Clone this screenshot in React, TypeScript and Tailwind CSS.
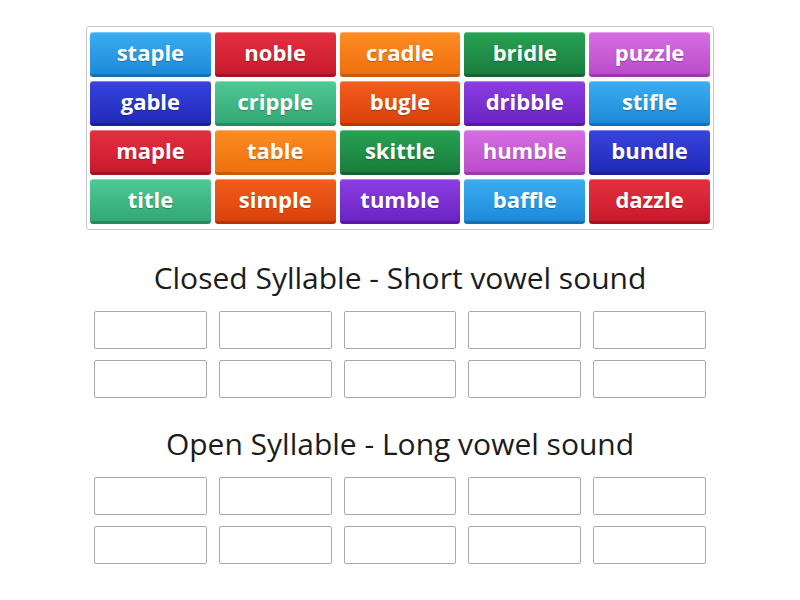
import React from "react";

type Tone = { bg: string };

const tones: Tone[] = [
  { bg: "bg-gradient-to-b from-[#3badf2] to-[#1d8ad8] border-b-[#1670b4]" },
  { bg: "bg-gradient-to-b from-[#e3303f] to-[#c9192d] border-b-[#a51224]" },
  { bg: "bg-gradient-to-b from-[#fc8c22] to-[#ef700c] border-b-[#cb5a06]" },
  { bg: "bg-gradient-to-b from-[#27a253] to-[#1b7d3e] border-b-[#146430]" },
  { bg: "bg-gradient-to-b from-[#d66ee2] to-[#bb4ccb] border-b-[#9c3aac]" },
  { bg: "bg-gradient-to-b from-[#3744de] to-[#2129b9] border-b-[#1a209a]" },
  { bg: "bg-gradient-to-b from-[#4fca95] to-[#33a875] border-b-[#288b60]" },
  { bg: "bg-gradient-to-b from-[#f25e1c] to-[#da410b] border-b-[#b53507]" },
  { bg: "bg-gradient-to-b from-[#8d3de2] to-[#6d23c3] border-b-[#571aa2]" },
];

const words = [
  "staple", "noble", "cradle", "bridle", "puzzle",
  "gable", "cripple", "bugle", "dribble", "stifle",
  "maple", "table", "skittle", "humble", "bundle",
  "title", "simple", "tumble", "baffle", "dazzle",
];

const Tile = ({ word, i }: { word: string; i: number }) => (
  <div
    className={`h-[45px] pb-[2px] rounded-[3px] border-b-[3px] flex items-center justify-center text-white font-bold text-[22px] shadow-[inset_0_1px_0_rgba(255,255,255,0.35)] [text-shadow:0_1px_1px_rgba(0,0,0,0.25)] ${tones[i % 9].bg}`}
  >
    {word}
  </div>
);

const DropGrid = () => (
  <div className="mx-2 grid grid-cols-5 gap-x-3 gap-y-[11px]">
    {Array.from({ length: 10 }).map((_, i) => (
      <div key={i} className="h-[38px] rounded-[2px] border border-[#a9a9a9] bg-white" />
    ))}
  </div>
);

export default function App() {
  return (
    <div className="w-[800px] h-[600px] bg-white font-['Open_Sans',sans-serif] text-[#1c1c1c]">
      <div className="w-[628px] ml-[86px] pt-[26px]">
        <div className="border border-[#c8c8c8] rounded-[3px] pt-[5px] pb-[5px] px-[3px] grid grid-cols-5 gap-[4px]">
          {words.map((w, i) => (
            <Tile key={w} word={w} i={i} />
          ))}
        </div>
        <h2 className="text-center text-[30px] leading-[40px] mt-[28px] mb-[13px]">
          Closed Syllable - Short vowel sound
        </h2>
        <DropGrid />
        <h2 className="text-center text-[30px] leading-[40px] mt-[26px] mb-[13px]">
          Open Syllable - Long vowel sound
        </h2>
        <DropGrid />
      </div>
    </div>
  );
}
